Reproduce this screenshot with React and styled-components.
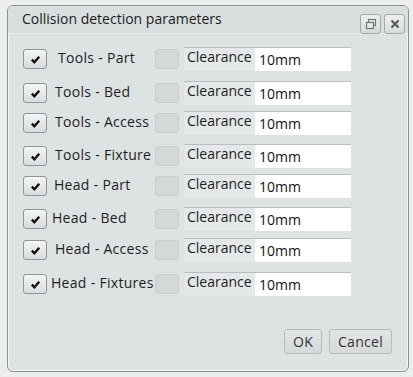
import React from "react";
import styled, { createGlobalStyle } from "styled-components";

const GlobalStyle = createGlobalStyle`
  body {
    margin: 0;
    background: #eceeee;
    font-family: "Open Sans", "Noto Sans", sans-serif;
  }
`;

const Page = styled.div`
  padding: 5px 4px 5px 7px;
`;

const Dialog = styled.div`
  width: 402px;
  height: 367px;
  box-sizing: border-box;
  border: 1px solid #8d9294;
  border-radius: 6px;
  background: #dde2e3;
  box-shadow: inset 0 0 0 1px #f3f5f5;
  display: flex;
  flex-direction: column;
`;

const TitleBar = styled.div`
  height: 27px;
  display: flex;
  align-items: center;
  padding: 0 3px 0 14px;
  border-bottom: 1px solid #e9eced;
  background: #d9dedf;
  border-radius: 5px 5px 0 0;
`;

const Title = styled.div`
  flex: 1;
  font-size: 14px;
  color: #1c1c1c;
  margin-top: -3px;
`;

const WinButton = styled.div`
  width: 19px;
  height: 18px;
  margin-left: 3px;
  margin-top: 8px;
  border: 1px solid #a4a9ab;
  border-radius: 3px;
  background: linear-gradient(#eef0f0, #d6dadb);
  display: flex;
  align-items: center;
  justify-content: center;
`;

const Rows = styled.div`
  display: flex;
  flex-direction: column;
  padding: 3px 0 0 15px;
`;

const Row = styled.div`
  display: flex;
  align-items: center;
  height: 24px;
  margin-top: ${(p) => p.$gap}px;
`;

const Check = styled.div`
  width: 24px;
  height: 20px;
  box-sizing: border-box;
  border: 1px solid ${(p) => (p.$checked ? "#8e9497" : "#c9cdce")};
  border-radius: 3px;
  background: ${(p) =>
    p.$checked ? "linear-gradient(#f4f5f5, #d8dcdd)" : "#d4d8d9"};
  display: flex;
  align-items: center;
  justify-content: center;
  flex-shrink: 0;
`;

const Label = styled.div`
  width: 108px;
  box-sizing: border-box;
  padding-left: ${(p) => p.$indent}px;
  font-size: 14px;
  letter-spacing: 0.3px;
  color: #1e1e1e;
  white-space: nowrap;
  margin-top: -3px;
`;

const Field = styled.div`
  margin-left: 5px;
  display: flex;
  height: 23px;
  border-top: 1px solid #b9bec0;
`;

const FieldName = styled.div`
  width: 71px;
  box-sizing: border-box;
  padding-left: 3px;
  background: #e4e8e9;
  font-size: 14px;
  color: #1e1e1e;
  line-height: 18px;
`;

const Input = styled.div`
  width: 96px;
  background: #ffffff;
  box-sizing: border-box;
  padding-left: 4px;
  font-size: 14px;
  color: #111;
  line-height: 24px;
`;

const Footer = styled.div`
  margin-top: auto;
  display: flex;
  justify-content: flex-end;
  gap: 7px;
  padding: 0 16px 17px 0;
`;

const Button = styled.div`
  height: 25px;
  min-width: ${(p) => p.$w}px;
  box-sizing: border-box;
  border: 1px solid #b7bcbe;
  border-radius: 3px;
  background: linear-gradient(#e3e6e7, #d5d9da);
  font-size: 14px;
  color: #333;
  display: flex;
  align-items: center;
  justify-content: center;
  letter-spacing: 0.3px;
`;

const Tick = () => (
  <svg width="11" height="9" viewBox="0 0 11 9">
    <path d="M1.8 4.6 L4.4 7.2 L9.2 1.8" fill="none" stroke="#111" strokeWidth="2.4" />
  </svg>
);

const rows = [
  { name: "Tools - Part", indent: 11, gap: 10 },
  { name: "Tools - Bed", indent: 8, gap: 10 },
  { name: "Tools - Access", indent: 8, gap: 6 },
  { name: "Tools - Fixture", indent: 8, gap: 9 },
  { name: "Head - Part", indent: 7, gap: 6 },
  { name: "Head - Bed", indent: 5, gap: 9 },
  { name: "Head - Access", indent: 8, gap: 7 },
  { name: "Head - Fixtures", indent: 4, gap: 10 },
];

export default function App() {
  return (
    <Page>
      <GlobalStyle />
      <Dialog>
        <TitleBar>
          <Title>Collision detection parameters</Title>
          <WinButton>
            <svg width="12" height="12" viewBox="0 0 12 12">
              <rect x="3.5" y="1.5" width="7" height="6" fill="none" stroke="#777" strokeWidth="1.2" />
              <rect x="1.5" y="4.5" width="7" height="6" fill="#e6e9e9" stroke="#777" strokeWidth="1.2" />
            </svg>
          </WinButton>
          <WinButton>
            <svg width="10" height="10" viewBox="0 0 10 10">
              <path d="M1.5 1.5 L8.5 8.5 M8.5 1.5 L1.5 8.5" stroke="#555" strokeWidth="2" />
            </svg>
          </WinButton>
        </TitleBar>
        <Rows>
          {rows.map((r) => (
            <Row key={r.name} $gap={r.gap}>
              <Check $checked>
                <Tick />
              </Check>
              <Label $indent={r.indent}>{r.name}</Label>
              <Check />
              <Field>
                <FieldName>Clearance</FieldName>
                <Input>10mm</Input>
              </Field>
            </Row>
          ))}
        </Rows>
        <Footer>
          <Button $w={38}>OK</Button>
          <Button $w={63}>Cancel</Button>
        </Footer>
      </Dialog>
    </Page>
  );
}
